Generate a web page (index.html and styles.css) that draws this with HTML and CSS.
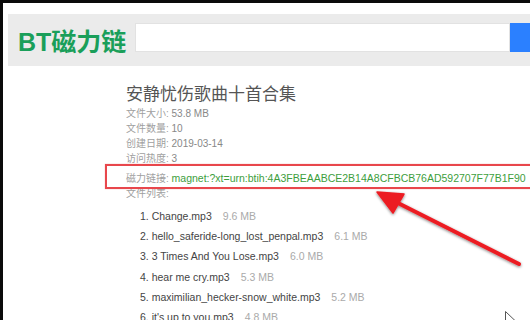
FILE: index.html
```html
<!DOCTYPE html>
<html lang="zh-CN">
<head>
<meta charset="utf-8">
<title>BT磁力链</title>
<link rel="stylesheet" href="styles.css">
</head>
<body>
<div class="frame">
  <div class="page">
    <header class="header">
      <div class="logo">BT磁力链</div>
      <div class="search">
        <div class="search-input"></div>
        <div class="search-btn"></div>
      </div>
    </header>
    <main class="content">
      <h1 class="title">安静忧伤歌曲十首合集</h1>
      <div class="info">
        <div class="row"><span class="label">文件大小:</span> <span class="value">53.8 MB</span></div>
        <div class="row"><span class="label">文件数量:</span> <span class="value">10</span></div>
        <div class="row"><span class="label">创建日期:</span> <span class="value">2019-03-14</span></div>
        <div class="row"><span class="label">访问热度:</span> <span class="value">3</span></div>
        <div class="row magnet-row"><span class="label">磁力链接:</span> <span class="magnet">magnet:?xt=urn:btih:4A3FBEAABCE2B14A8CFBCB76AD592707F77B1F90</span><div class="highlight"></div></div>
        <div class="row"><span class="label">文件列表:</span></div>
      </div>
      <ol class="files">
        <li><span class="fname">1. Change.mp3</span><span class="fsize">9.6 MB</span></li>
        <li><span class="fname">2. hello_saferide-long_lost_penpal.mp3</span><span class="fsize">6.1 MB</span></li>
        <li><span class="fname">3. 3 Times And You Lose.mp3</span><span class="fsize">6.0 MB</span></li>
        <li><span class="fname">4. hear me cry.mp3</span><span class="fsize">5.3 MB</span></li>
        <li><span class="fname">5. maximilian_hecker-snow_white.mp3</span><span class="fsize">5.2 MB</span></li>
        <li><span class="fname">6. it's up to you.mp3</span><span class="fsize">4.8 MB</span></li>
      </ol>
    </main>
    <svg class="annot" width="530" height="320" viewBox="0 0 530 320">
      <defs>
        <filter id="sh" x="-20%" y="-20%" width="140%" height="140%">
          <feGaussianBlur in="SourceAlpha" stdDeviation="1.5"/>
          <feOffset dx="0" dy="1" result="b"/>
          <feComponentTransfer><feFuncA type="linear" slope="0.5"/></feComponentTransfer>
          <feMerge><feMergeNode/><feMergeNode in="SourceGraphic"/></feMerge>
        </filter>
      </defs>
      <g filter="url(#sh)">
        <line x1="519" y1="264" x2="396" y2="202" stroke="#ec1c24" stroke-width="4" stroke-linecap="round"/>
        <polygon points="377,192 404,194 393,213" fill="#ec1c24" stroke="#ec1c24" stroke-width="1.5" stroke-linejoin="round"/>
      </g>
      <path d="M505.5 311.5 L505.5 326 L509 322.5 L512 329 L514 328 L511 321.5 L516 321.5 Z" fill="#fff" stroke="#555" stroke-width="1"/>
    </svg>
  </div>
</div>
</body>
</html>
```
FILE: styles.css
```css
html, body {
  margin: 0;
  padding: 0;
  background: #000;
  overflow: hidden;
}
.frame {
  width: 530px;
  height: 320px;
  padding: 3px 0 0 3px;
  box-sizing: border-box;
  background: #0a0a0a;
}
.page {
  position: relative;
  width: 527px;
  height: 317px;
  background: #fff;
  overflow: hidden;
  font-family: "Liberation Sans", Arial, "Noto Sans CJK SC", sans-serif;
}
.header {
  margin: 11px 0 0 5px;
  height: 52px;
  background: #ebebeb;
  display: flex;
  align-items: flex-start;
  padding: 9px 0 0 10px;
  box-sizing: border-box;
}
.logo {
  font-size: 25px;
  font-weight: bold;
  color: #1a9f5a;
  line-height: 30px;
  margin-top: 4px;
  white-space: nowrap;
}
.search {
  display: flex;
  margin-left: 9px;
  flex: 1;
}
.search-input {
  flex: 1;
  height: 29px;
  background: #fff;
  border: 1px solid #e2e2e2;
  box-sizing: border-box;
}
.search-btn {
  width: 20px;
  height: 29px;
  background: #2b80ff;
}
.content {
  padding-left: 123px;
}
.title {
  margin: 18px 0 0 0;
  font-size: 17px;
  font-weight: normal;
  line-height: 22px;
  color: #555;
}
.info {
  font-size: 10px;
  line-height: 15px;
  color: #999;
}
.row {
  white-space: nowrap;
}
.label {
  color: #a0a0a0;
}
.value {
  color: #888;
}
.magnet-row {
  position: relative;
  margin: 5px 0 0 0;
}
.magnet {
  color: #3d9e3d;
  font-size: 10.5px;
}
.highlight {
  position: absolute;
  left: -21px;
  top: -7px;
  width: 460px;
  height: 25px;
  border: 2px solid #e8474c;
  box-sizing: border-box;
  box-shadow: 0 0 1px rgba(232, 71, 76, 0.5);
}
.files {
  list-style: none;
  margin: 5px 0 0 14px;
  padding: 0;
  font-size: 10.5px;
  line-height: 20.2px;
  color: #444;
}
.files li {
  white-space: nowrap;
}
.fsize {
  color: #aaa;
  margin-left: 11px;
}
.annot {
  position: absolute;
  left: -3px;
  top: -3px;
  pointer-events: none;
}
```
